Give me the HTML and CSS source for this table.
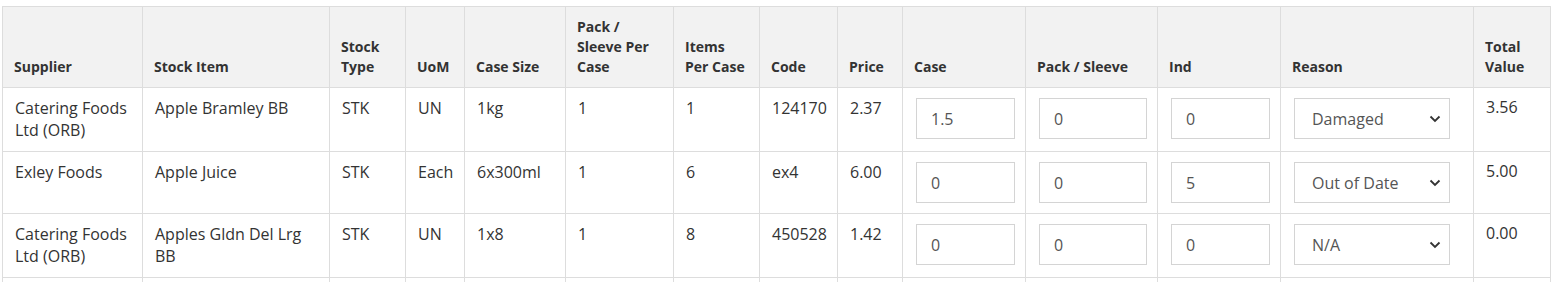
FILE: index.html
```html
<!DOCTYPE html>
<html>
<head>
<meta charset="utf-8">
<link rel="stylesheet" href="styles.css">
</head>
<body>
<div class="wrap">
<table class="stock">
<colgroup>
<col class="c-sup"><col class="c-item"><col class="c-type"><col class="c-uom"><col class="c-size"><col class="c-pack"><col class="c-items"><col class="c-code"><col class="c-price"><col class="c-case"><col class="c-packin"><col class="c-ind"><col class="c-reason"><col class="c-total">
</colgroup>
<thead>
<tr>
<th>Supplier</th><th>Stock Item</th><th>Stock Type</th><th>UoM</th><th>Case Size</th><th>Pack / Sleeve Per Case</th><th>Items Per Case</th><th>Code</th><th>Price</th><th>Case</th><th>Pack / Sleeve</th><th>Ind</th><th>Reason</th><th>Total Value</th>
</tr>
</thead>
<tbody>
<tr>
<td>Catering Foods Ltd (ORB)</td><td>Apple Bramley BB</td><td>STK</td><td>UN</td><td>1kg</td><td>1</td><td>1</td><td>124170</td><td>2.37</td>
<td class="in"><input class="field" value="1.5"></td>
<td class="in"><input class="field" value="0"></td>
<td class="in"><input class="field" value="0"></td>
<td class="in"><div class="sel"><select class="field"><option>Damaged</option></select><svg class="chev" width="12" height="8" viewBox="0 0 12 8"><path d="M1.5 1.5 L6 6 L10.5 1.5" fill="none" stroke="#333" stroke-width="1.8"/></svg></div></td>
<td class="total">3.56</td>
</tr>
<tr>
<td>Exley Foods</td><td>Apple Juice</td><td>STK</td><td>Each</td><td>6x300ml</td><td>1</td><td>6</td><td>ex4</td><td>6.00</td>
<td class="in"><input class="field" value="0"></td>
<td class="in"><input class="field" value="0"></td>
<td class="in"><input class="field" value="5"></td>
<td class="in"><div class="sel"><select class="field"><option>Out of Date</option></select><svg class="chev" width="12" height="8" viewBox="0 0 12 8"><path d="M1.5 1.5 L6 6 L10.5 1.5" fill="none" stroke="#333" stroke-width="1.8"/></svg></div></td>
<td class="total">5.00</td>
</tr>
<tr>
<td>Catering Foods Ltd (ORB)</td><td>Apples Gldn Del Lrg BB</td><td>STK</td><td>UN</td><td>1x8</td><td>1</td><td>8</td><td>450528</td><td>1.42</td>
<td class="in"><input class="field" value="0"></td>
<td class="in"><input class="field" value="0"></td>
<td class="in"><input class="field" value="0"></td>
<td class="in"><div class="sel"><select class="field"><option>N/A</option></select><svg class="chev" width="12" height="8" viewBox="0 0 12 8"><path d="M1.5 1.5 L6 6 L10.5 1.5" fill="none" stroke="#333" stroke-width="1.8"/></svg></div></td>
<td class="total">0.00</td>
</tr>
<tr class="next">
<td></td><td></td><td></td><td></td><td></td><td></td><td></td><td></td><td></td><td></td><td></td><td></td><td></td><td></td>
</tr>
</tbody>
</table>
</div>
</body>
</html>
```

FILE: styles.css
```css
html, body {
  margin: 0;
  padding: 0;
  background: #fff;
}
body {
  font-family: "Open Sans", "Liberation Sans", sans-serif;
  color: #333;
  font-size: 16px;
  line-height: 21.5px;
}
.wrap {
  padding: 6px 0 0 2px;
}
.stock {
  border-collapse: collapse;
  table-layout: fixed;
  width: 1549px;
}
.stock th, .stock td {
  border: 1px solid #ddd;
  text-align: left;
}
.stock th {
  padding: 10px 10px 10px 11px;
  background: #f2f2f2;
  font-size: 14px;
  font-weight: 700;
  line-height: 20px;
  vertical-align: bottom;
  color: #333;
}
.stock td {
  padding: 10px 10px 10px 12px;
  vertical-align: top;
}
.stock td.total {
  padding-top: 9px;
}
.c-sup { width: 140px; }
.c-item { width: 187px; }
.c-type { width: 76px; }
.c-uom { width: 59px; }
.c-size { width: 101px; }
.c-pack { width: 108px; }
.c-items { width: 86px; }
.c-code { width: 78px; }
.c-price { width: 65px; }
.c-case { width: 123px; }
.c-packin { width: 132px; }
.c-ind { width: 123px; }
.c-reason { width: 193px; }
.c-total { width: 77px; }
.stock td.in {
  padding: 10px 10px 10px 13px;
}
.field {
  display: block;
  box-sizing: border-box;
  width: 100%;
  height: 41px;
  margin: 0;
  padding: 0 14px;
  border: 1px solid #d4d4d4;
  border-radius: 0;
  background: #fff;
  font-family: "Open Sans", "Liberation Sans", sans-serif;
  font-size: 16px;
  color: #555;
  outline: none;
}
.sel {
  position: relative;
  width: 156px;
}
.sel select {
  appearance: none;
  -webkit-appearance: none;
  padding: 0 30px 0 17px;
}
.chev {
  position: absolute;
  right: 9px;
  top: 17px;
  pointer-events: none;
}
.stock tr.next td {
  height: 20px;
}
```
